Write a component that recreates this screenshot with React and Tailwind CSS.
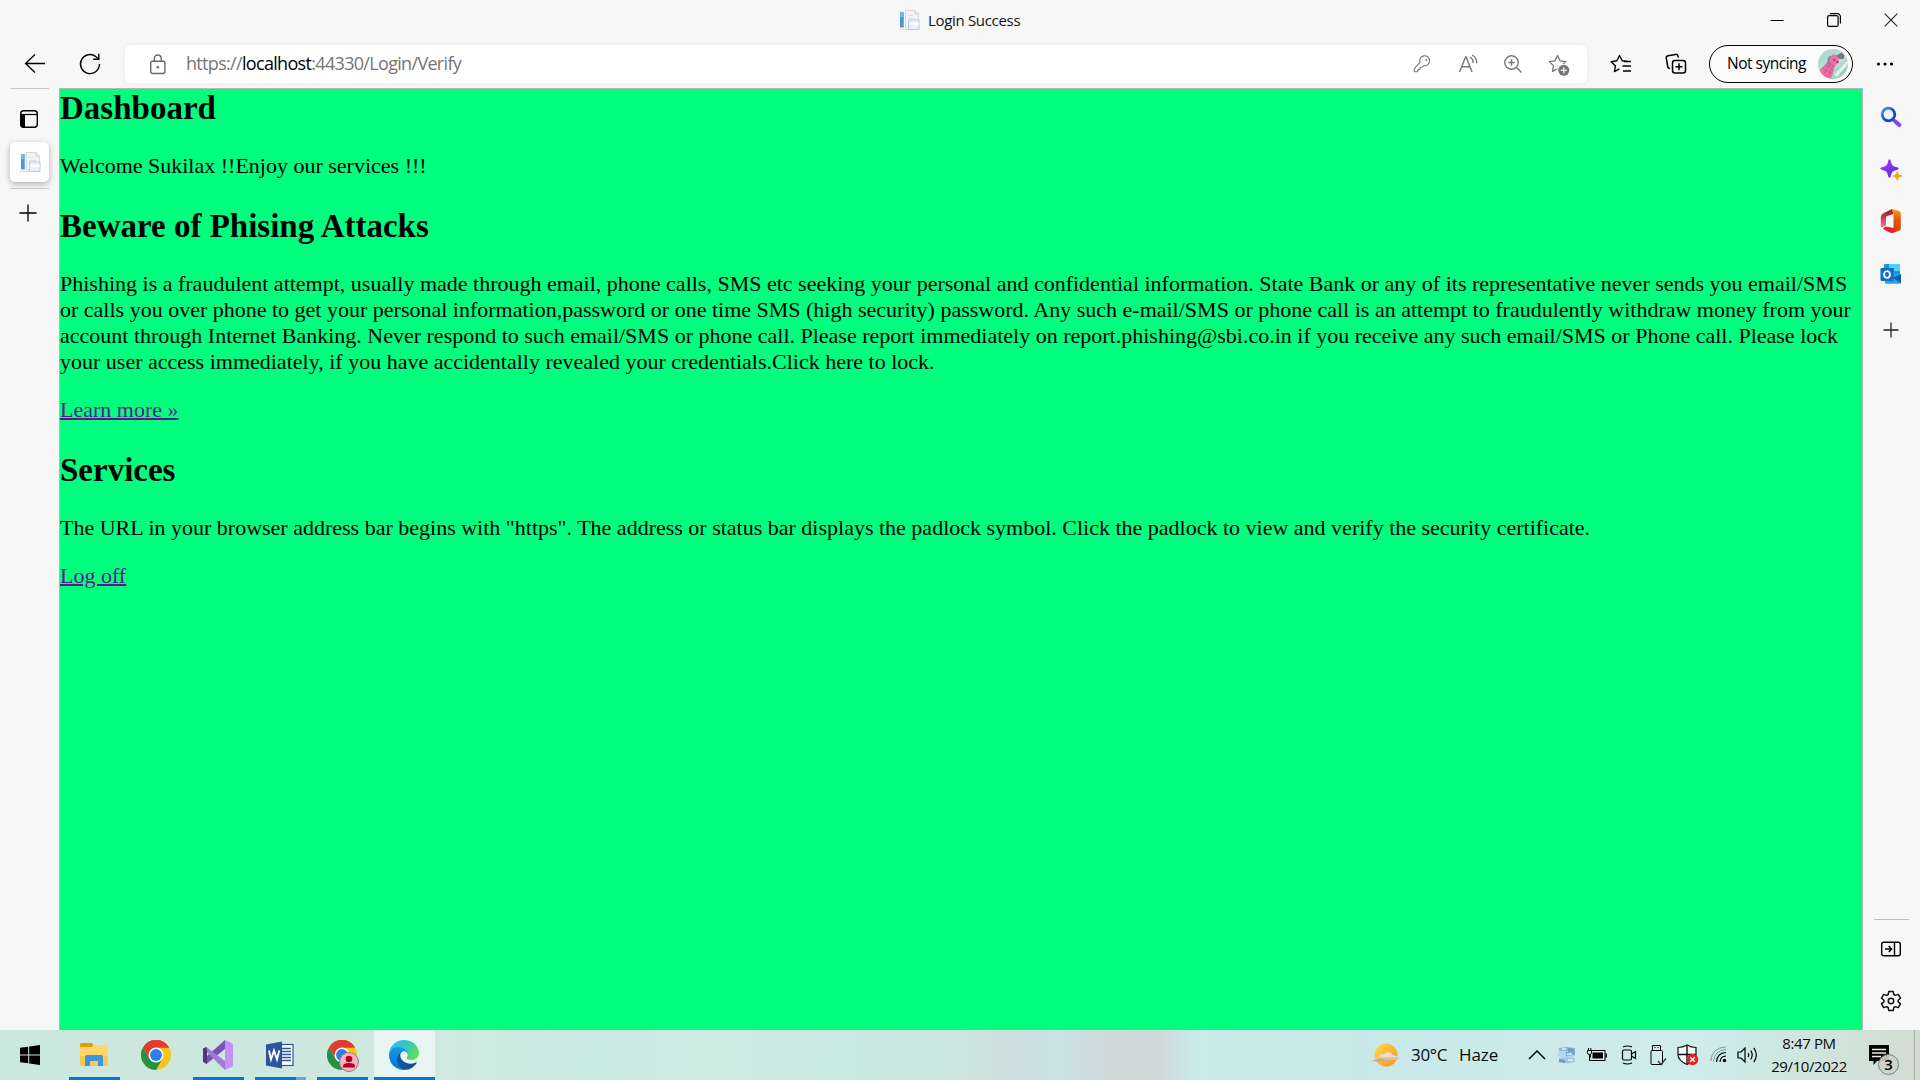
const UI = "font-['Open_Sans','Noto_Sans',sans-serif]";

function Icon({ w = 24, h, vb, children, className = '' }) {
  const hh = h ?? w;
  return (
    <svg width={w} height={hh} viewBox={vb ?? `0 0 ${w} ${hh}`} fill="none" className={`block shrink-0 ${className}`}>
      {children}
    </svg>
  );
}

function Slot({ className = '', children }) {
  return <div className={`flex shrink-0 items-center justify-center ${className}`}>{children}</div>;
}

function Favicon() {
  return (
    <Icon w={22}>
      <path d="M1 2.500h1.500M1 20.500h20" stroke="#d8dde2" />
      <rect x="2" y="3" width="3.800" height="15.500" fill="#4d9bcf" />
      <rect x="2" y="3" width="3.800" height="5" fill="#79b9e0" />
      <path d="M7.500 1.500h9.500l3.500 3.500v14h-13z" fill="#f4f5f8" stroke="#d5dae1" />
      <path d="M17 1.500V5h3.500" stroke="#c9d0d9" />
      <path d="M10 6.500h5M10 9.500h7M10 12.500h3" stroke="#d9dde6" />
      <rect x="10.500" y="11" width="10.500" height="9.500" fill="#eceff5" stroke="#c3cad6" />
      <path d="M11 14.800h10" stroke="#fff" strokeWidth="1.500" />
    </Icon>
  );
}

function TitleBar() {
  return (
    <div className="flex h-[39px] items-center">
      <div className="w-[898px]" />
      <Favicon />
      <div className={`ml-[8px] mt-0.5 w-[820px] whitespace-nowrap text-[15px] tracking-[-0.32px] text-[#111] ${UI}`}>Login Success</div>
      <Slot className="w-[57px]">
        <Icon w={14}><path d="M.5 7.500h13" stroke="#000" /></Icon>
      </Slot>
      <Slot className="w-[57px]">
        <Icon w={14}>
          <rect x=".6" y="2.600" width="10.500" height="10.800" rx="1.500" stroke="#000" strokeWidth="1.200" />
          <path d="M3 .7h7.500a2.900 2.900 0 0 1 2.900 2.900V10.500" stroke="#000" strokeWidth="1.200" />
        </Icon>
      </Slot>
      <Slot className="w-[58px]">
        <Icon w={14}><path d="M.7.700l12.600 12.600M13.300.700L.700 13.300" stroke="#222" strokeWidth="1.100" /></Icon>
      </Slot>
    </div>
  );
}

const STAR = 'M9.500 1.500l2.500 5.300 5.700.8-4.200 4 1 5.800-5-2.700-5 2.700 1-5.800-4.200-4 5.700-.8z';

function AddressBar() {
  return (
    <div className="flex h-[38px] w-[1462px] shrink-0 items-center rounded-md bg-white shadow-[0_0_6px_rgba(0,0,0,0.07)]">
      <Slot className="w-[61px] pl-[4px]">
        <Icon w={18} h={22} className="mt-px">
          <rect x="1.700" y="7.300" width="14.200" height="12.200" rx="2" stroke="#686868" strokeWidth="1.400" />
          <path d="M5.300 7V4.500a3.500 3.500 0 0 1 7 0V7" stroke="#686868" strokeWidth="1.400" />
          <circle cx="8.800" cy="13.300" r="1.300" fill="#686868" />
        </Icon>
      </Slot>
      <div className={`w-[1217px] -mt-px whitespace-nowrap text-[18px] tracking-[-0.68px] text-[#757575] ${UI}`}>
        https://<span className="text-black">localhost</span>:44330/Login/Verify
      </div>
      <Slot className="w-[40px]">
        <Icon w={20}>
          <path d="M11.400 11.900a5.300 5.300 0 1 0-4-3.500L1.800 14.400c-.5.500-.5.800-.5 1.300v1.600c0 .6.400 1 1 1h1.900c.6 0 1-.4 1-1v-1.400h1.600c.5 0 .8-.4.800-.8v-1.500h1.500c.5 0 .8-.2 1.100-.6z" stroke="#757575" strokeWidth="1.200" strokeLinejoin="round" transform="translate(0 .5) scale(.94)" />
          <circle cx="13.300" cy="6" r="1" fill="#757575" />
        </Icon>
      </Slot>
      <Slot className="w-[50px]">
        <Icon w={22} h={20} className="ml-[2px]">
          <path d="M1.500 18L7.600 3h.6l5.800 15M3.700 12.800h8.200" stroke="#757575" strokeWidth="1.400" />
          <path d="M11.500 3.500c1.700 1 2.600 2.800 2.600 5M13.600 1.300c2.800 1.600 4.100 4.200 4.200 7.500" stroke="#757575" strokeWidth="1.300" strokeLinecap="round" transform="translate(1 0)" />
        </Icon>
      </Slot>
      <Slot className="w-[40px]">
        <Icon w={20}>
          <circle cx="8.500" cy="8.500" r="6.700" stroke="#757575" strokeWidth="1.400" />
          <path d="M13.500 13.500l5 5M8.500 5.300v6.400M5.300 8.500h6.400" stroke="#757575" strokeWidth="1.400" />
        </Icon>
      </Slot>
      <Slot className="w-[51px]">
        <Icon w={24} className="mt-1">
          <path d={STAR} transform="translate(1 0)" stroke="#757575" strokeWidth="1.300" strokeLinejoin="round" />
          <circle cx="16.800" cy="16.300" r="6.500" fill="#fff" />
          <circle cx="16.800" cy="16.300" r="5.500" fill="#757575" />
          <path d="M16.800 13.300v6M13.800 16.300h6" stroke="#fff" strokeWidth="1.300" />
        </Icon>
      </Slot>
    </div>
  );
}

function Avatar() {
  return (
    <Icon w={30}>
      <defs>
        <clipPath id="av"><circle cx="15" cy="15" r="15" /></clipPath>
        <linearGradient id="avb" x1="0" y1="0" x2="1" y2="1">
          <stop offset="0" stopColor="#a4d6cb" />
          <stop offset=".55" stopColor="#bfe0d6" />
          <stop offset="1" stopColor="#7fbcae" />
        </linearGradient>
      </defs>
      <g clipPath="url(#av)">
        <rect width="30" height="30" fill="url(#avb)" />
        <path d="M16 26L30 11v4L19 28z" fill="#dff2ec" />
        <path d="M1 22L12 10l3-5 5 2 1 6-4 4-4 13H5z" fill="#ee6fa5" />
        <path d="M4 19l11 6M7 16l9 6M10 13l7 5M6 25l6-11M10 28l5-11" stroke="#d84e8c" strokeWidth=".8" />
        <path d="M13 7c-3 2-3 5-2 8l1 3" stroke="#848593" strokeWidth="2" />
        <path d="M18.500 6.500l5-3 3 3-1 3.500-4.500 0z" fill="#6c7c84" />
        <circle cx="16" cy="11" r="1" fill="#7b3763" />
        <circle cx="19.500" cy="13" r="1" fill="#7b3763" />
      </g>
    </Icon>
  );
}

function Toolbar() {
  return (
    <div className="flex h-[49px] items-start pt-[6px]">
      <div className="flex h-[38px] w-[125px] shrink-0 items-center pl-[23px]">
        <Icon w={24}>
          <path d="M22 11.500H2.500M12 2.500L2.500 11.500l9.500 9" stroke="#000" strokeWidth="1.300" />
        </Icon>
        <Icon w={24} className="ml-[31px]">
          <path d="M21.500 12A9.500 9.500 0 1 1 18 4.700l2.500 2.300" stroke="#000" strokeWidth="1.400" />
          <path d="M20.800 1.800v5.400h-5.600" stroke="#000" strokeWidth="1.400" />
        </Icon>
      </div>
      <AddressBar />
      <div className="flex h-[38px] items-center">
        <Slot className="w-[68px]">
          <Icon w={22}>
            <path d="M17.300 7.500l-5.100-.7-2.700-5.300L6.900 6.800l-5.700.9 4.200 4-1 5.900 5-2.700" transform="translate(0 1)" stroke="#000" strokeWidth="1.400" strokeLinejoin="round" />
            <path d="M14 8.500h7M12.500 13h8.500M13 18h8" stroke="#000" strokeWidth="1.400" />
          </Icon>
        </Slot>
        <Slot className="w-[42px]">
          <Icon w={22}>
            <rect x="7.500" y="7.500" width="13" height="12.500" rx="2.500" stroke="#000" strokeWidth="1.500" />
            <path d="M14 10.300v7M10.500 13.800h7" stroke="#000" strokeWidth="1.500" />
            <path d="M5 15.500l-1-.3a2.300 2.300 0 0 1-1.300-1.700L1.300 5.200a2.200 2.200 0 0 1 1.800-2.500L10.500 1.400A2.200 2.200 0 0 1 13 3l.3 1.500" stroke="#000" strokeWidth="1.500" />
          </Icon>
        </Slot>
        <div className="ml-3 flex h-[38px] w-[144px] items-center rounded-full border-[1.5px] border-black bg-[#fbfbfb] pl-[17px]">
          <span className={`w-[91px] whitespace-nowrap text-[15.5px] tracking-[-0.5px] text-black ${UI}`}>Not syncing</span>
          <Avatar />
        </div>
        <Slot className="w-[64px]">
          <Icon w={18} h={6}>
            <circle cx="2.500" cy="3" r="1.600" fill="#000" />
            <circle cx="9" cy="3" r="1.600" fill="#000" />
            <circle cx="15.500" cy="3" r="1.600" fill="#000" />
          </Icon>
        </Slot>
      </div>
    </div>
  );
}

function LeftRail() {
  return (
    <div className="flex w-[59px] shrink-0 flex-col items-start pl-[10px]">
      <div className="h-px w-[39px] bg-[#c8c8c8]" />
      <Icon w={20} className="ml-[9px] mt-5">
        <rect x="1.700" y="1.700" width="16.600" height="16.600" rx="3" stroke="#000" strokeWidth="1.400" />
        <path d="M2 5.500h16" stroke="#000" strokeWidth="1.200" />
        <path d="M1.500 5.500H6v13H4a2.500 2.500 0 0 1-2.500-2.500z" fill="#000" />
      </Icon>
      <div className="mt-[13px] flex h-10 w-[39px] items-center justify-center rounded-[5px] bg-white shadow-[0_2px_6px_rgba(0,0,0,0.3)]">
        <Favicon />
      </div>
      <div className="mt-[6px] h-px w-[39px] bg-[#c8c8c8]" />
      <Icon w={18} className="ml-[9px] mt-[15px]">
        <path d="M9 .5v17M.5 9h17" stroke="#000" strokeWidth="1.300" />
      </Icon>
    </div>
  );
}

function RightRail() {
  return (
    <div className="flex w-[57px] shrink-0 flex-col items-center pr-px">
      <Icon w={22} className="mt-[18px]">
        <defs>
          <linearGradient id="mg" x1="0" y1="0" x2="1" y2="1">
            <stop offset="0" stopColor="#2fa3ee" /><stop offset=".6" stopColor="#1449bd" />
          </linearGradient>
        </defs>
        <circle cx="8.500" cy="8.500" r="6.300" stroke="url(#mg)" strokeWidth="2.800" fill="#e6f5ff" />
        <path d="M12.800 13l2.500 2.500" stroke="#4b3a86" strokeWidth="2.500" />
        <path d="M15.300 15.500l4 3.600" stroke="#8b45e8" strokeWidth="4" strokeLinecap="round" />
      </Icon>
      <Icon w={24} className="mt-[30px]">
        <defs>
          <linearGradient id="sg" x1="0" y1="0" x2="1" y2="1">
            <stop offset="0" stopColor="#a63be8" /><stop offset=".5" stopColor="#7a35ef" /><stop offset="1" stopColor="#5326c9" />
          </linearGradient>
        </defs>
        <path d="M10.500 1.500c.8 0 1 .5 1.200 1.200 1 4.600 1.800 5.400 6.600 6.600 1.700.5 1.700 1.900 0 2.400-4.800 1.200-5.600 2-6.600 6.900-.4 1.600-2 1.600-2.400 0-1-4.900-1.800-5.700-6.600-6.900-1.700-.5-1.700-1.900 0-2.400 4.800-1.200 5.600-2 6.600-6.600.2-.7.400-1.200 1.200-1.200z" fill="url(#sg)" />
        <path d="M18.300 13.500c.9 3 1.300 3.600 4.500 4.500-3.200.9-3.600 1.500-4.500 4.500-.9-3-1.300-3.600-4.500-4.500 3.200-.9 3.600-1.500 4.500-4.500z" fill="#f2ab16" stroke="#f2ab16" strokeLinejoin="round" />
      </Icon>
      <Icon w={22} h={26} className="mt-[26px]">
        <defs>
          <linearGradient id="og" x1="0" y1="0" x2="0" y2="1">
            <stop offset="0" stopColor="#f9a215" /><stop offset=".45" stopColor="#ea5306" /><stop offset="1" stopColor="#d83b01" />
          </linearGradient>
          <linearGradient id="og2" x1="0" y1="0" x2="0" y2="1">
            <stop offset="0" stopColor="#9e1512" /><stop offset="1" stopColor="#f4769f" />
          </linearGradient>
        </defs>
        <path d="M12 1L3 5.500Q.8 6.800.8 9v8.500q0 2 1.500 2L6 17.300V8.500L13.500 6z" fill="url(#og2)" />
        <path d="M12 1l6.500 1.800q2.300.8 2.300 3v14.500q0 2-2.300 2.700L12 25l1.500-4.700V5.500z" fill="url(#og)" />
        <path d="M6 18.500l-2.500 1.300q-.5 1 .5 1.700l5 2.800q1.500.8 3 .7l4-1.200L13.500 20z" fill="#e0223c" />
      </Icon>
      <Icon w={22} className="mt-[29px]">
        <rect x="4" y="1" width="16" height="12" rx="1" fill="#1e93e3" />
        <path d="M9 1h11v7h-6V5H9z" fill="#4fd0f7" />
        <path d="M5 11h16v8.500a1.300 1.300 0 0 1-1.300 1.300H6.300A1.300 1.300 0 0 1 5 19.500z" fill="#2ba0e6" />
        <path d="M21 11v9L12.500 14.800z" fill="#0f5fae" />
        <rect x=".5" y="5" width="13" height="13" rx="1.200" fill="#0b70c8" />
        <ellipse cx="7" cy="11.500" rx="3" ry="3.400" stroke="#fff" strokeWidth="1.900" />
      </Icon>
      <Icon w={16} className="mt-[37px]">
        <path d="M8 .5v15M.5 8h15" stroke="#222" strokeWidth="1.300" />
      </Icon>
      <div className="mt-auto h-px w-[35px] bg-[#bcbcbc]" />
      <Icon w={22} className="mt-[18px]">
        <rect x="1.700" y="4.200" width="18.600" height="13.600" rx="2" stroke="#000" strokeWidth="1.400" />
        <path d="M14.500 4.500v13M5 11h6.500M8.700 8l3 3-3 3" stroke="#000" strokeWidth="1.400" />
      </Icon>
      <Icon w={24} vb="0 0 24 24" className="mt-[29px] mb-[17px]">
        <circle cx="12" cy="12" r="2.700" stroke="#111" strokeWidth="1.500" />
        <path d="M9.800 2.500h4.400l.6 3 1.500.9 3-1 2.200 3.700-2.400 2.100v1.600l2.400 2.100-2.200 3.700-3-1-1.500.9-.6 3H9.800l-.6-3-1.500-.9-3 1-2.200-3.700 2.400-2.100v-1.600L2.500 9.100l2.200-3.700 3 1 1.500-.9z" stroke="#111" strokeWidth="1.500" strokeLinejoin="round" />
      </Icon>
    </div>
  );
}

function Page() {
  const h2 = 'text-[33px] font-bold leading-[36px]';
  const link = 'block w-fit text-[22px] leading-[26px] text-[#551a8b] underline decoration-2';
  return (
    <main className="flex-1 overflow-hidden border-l border-t border-r border-[#b5b5b5] bg-[#00ff7f] pt-px font-['Liberation_Serif','Times_New_Roman',serif] text-[22px] leading-[26px] text-black">
      <h2 className={h2}>Dashboard</h2>
      <p className="mt-[27px]">Welcome Sukilax !!Enjoy our services !!!</p>
      <h2 className={`mt-[29px] ${h2}`}>Beware of Phising Attacks</h2>
      <p className="mt-[27px] whitespace-nowrap">
        Phishing is a fraudulent attempt, usually made through email, phone calls, SMS etc seeking your personal and confidential information. State Bank or any of its representative never sends you email/SMS<br />
        or calls you over phone to get your personal information,password or one time SMS (high security) password. Any such e-mail/SMS or phone call is an attempt to fraudulently withdraw money from your<br />
        account through Internet Banking. Never respond to such email/SMS or phone call. Please report immediately on report.phishing@sbi.co.in if you receive any such email/SMS or Phone call. Please lock<br />
        your user access immediately, if you have accidentally revealed your credentials.Click here to lock.
      </p>
      <a className={`mt-[22px] ${link}`}>Learn more »</a>
      <h2 className={`mt-[29px] ${h2}`}>Services</h2>
      <p className="mt-[27px] whitespace-nowrap">
        The URL in your browser address bar begins with "https". The address or status bar displays the padlock symbol. Click the padlock to view and verify the security certificate.
      </p>
      <a className={`mt-[22px] ${link}`}>Log off</a>
    </main>
  );
}

function ChromeLogo() {
  return (
    <Icon w={30} vb="0 0 48 48">
      <circle cx="24" cy="24" r="24" fill="#fcc31e" />
      <path d="M24 24L3.200 12A24 24 0 0 1 44.800 12H24z" fill="#e33b2e" />
      <path d="M3.200 12A24 24 0 0 0 24 48l10.400-18L24 24 13.600 30z" fill="#229342" />
      <path d="M24 0A24 24 0 0 0 3.200 12l10.400 18L24 12h20.800A24 24 0 0 0 24 0z" fill="#e33b2e" />
      <circle cx="24" cy="24" r="12" fill="#fff" />
      <circle cx="24" cy="24" r="9.500" fill="#2f7de9" />
    </Icon>
  );
}

function Explorer() {
  return (
    <Icon w={28} h={26}>
      <path d="M0 2.500Q0 1 1.500 1H12l1.500 2L12 5H0z" fill="#e0a000" />
      <path d="M0 5h12l2-2h12.500q1 0 1 1v20H0z" fill="#ffd667" />
      <path d="M0 14h27.500v10H0z" fill="#fbc94f" />
      <path d="M5 24V15q0-2 2-2h14q2 0 2 2v9h-5v-5h-8v5z" fill="#3a96dd" />
    </Icon>
  );
}

function VisualStudio() {
  return (
    <Icon w={30}>
      <path d="M0 8.500L3.500 7 22 30l-3-1.500L2 25q-2-.5-2-2.500z" fill="none" />
      <path d="M0 21.500L3.500 24 22 9V0L0 19.500z" fill="#7a52b5" />
      <path d="M0 8.500L3.500 7 22 21v9z" fill="#a378d8" />
      <path d="M22 0l6.500 3Q30 3.700 30 5v20q0 1.300-1.500 2L22 30z" fill="#c391f5" />
      <path d="M0 8.500L3.500 7 4 11v8l-.5 5L0 21.500z" fill="#52367f" />
    </Icon>
  );
}

function Word() {
  return (
    <Icon w={28}>
      <rect x="14" y="3.500" width="13" height="21" fill="#fff" stroke="#2b579a" strokeWidth="1.200" />
      <path d="M16 7.500h9M16 10.500h9M16 13.500h9M16 16.500h9M16 19.500h9" stroke="#2b579a" strokeWidth="1.300" />
      <path d="M0 3.500L16 .5v27L0 24.500z" fill="#2b579a" />
      <path d="M3 9.500l2 9 3-9 3 9 2.300-9" stroke="#fff" strokeWidth="1.900" />
    </Icon>
  );
}

function EdgeLogo() {
  return (
    <Icon w={30} vb="0 0 256 256">
      <defs>
        <linearGradient id="e1" x1="0" y1="0" x2="1" y2="0"><stop offset="0" stopColor="#0c59a4" /><stop offset="1" stopColor="#114a8b" /></linearGradient>
        <linearGradient id="e2" x1=".6" y1="0" x2=".3" y2="1"><stop offset="0" stopColor="#1b9de2" /><stop offset="1" stopColor="#0078d4" /></linearGradient>
        <linearGradient id="e3" x1="0" y1=".2" x2="1" y2=".6"><stop offset="0" stopColor="#35b9ee" /><stop offset=".5" stopColor="#34c4cf" /><stop offset="1" stopColor="#62e050" /></linearGradient>
      </defs>
      <path d="M231 190.500a90 90 0 0 1-10.500 4.700 101.900 101.900 0 0 1-35.900 6.500c-47.300 0-88.500-32.500-88.500-74.300a31.500 31.500 0 0 1 16.400-27.300c-42.800 1.800-53.800 46.400-53.800 72.500 0 73.900 68.100 81.400 82.800 81.400 7.900 0 19.800-2.300 27-4.600l1.300-.4a128.300 128.300 0 0 0 66.600-52.800 4 4 0 0 0-5.400-5.700z" fill="url(#e1)" />
      <path d="M105.700 241.400a79.200 79.200 0 0 1-22.700-21.300 80.700 80.700 0 0 1 29.500-120c3.200-1.500 8.500-4.100 15.600-4a32.400 32.400 0 0 1 25.700 13 31.900 31.900 0 0 1 6.300 18.700c0-.2 24.500-79.600-80-79.600-43.900 0-80 41.700-80 78.200a130.200 130.200 0 0 0 12.100 56 128 128 0 0 0 156.400 67.100 75.500 75.500 0 0 1-62.800-8z" fill="url(#e2)" />
      <path d="M152.300 148.900c-.8 1-3.300 2.500-3.300 5.600 0 2.600 1.700 5.200 4.800 7.300 14.300 10 41.400 8.600 41.500 8.600a59.600 59.600 0 0 0 30.300-8.300 61.400 61.400 0 0 0 30.400-52.900c.3-22.400-8-37.300-11.300-43.900C223.500 23.900 177.700 0 128 0A128 128 0 0 0 0 126.200c.5-36.500 36.800-66 80-66 3.500 0 23.500.3 42 10.100 16.300 8.500 24.900 18.900 30.800 29.200 6.200 10.700 7.300 24.100 7.300 29.500s-2.700 13.300-7.800 19.900z" fill="url(#e3)" />
    </Icon>
  );
}

function Task({ children, line, className = '' }) {
  return (
    <div className={`flex h-[50px] shrink-0 flex-col items-center justify-between ${className}`}>
      <Slot className="h-[47px] pt-[3px] pr-px">{children}</Slot>
      {line}
    </div>
  );
}

function Taskbar() {
  const bar = 'h-[3px] w-[51px] bg-[#0078d7]';
  return (
    <footer className={`flex h-[50px] items-center bg-[linear-gradient(90deg,#cbe8de_0px,#cde7de_300px,#cfeae0_440px,#cbeae4_605px,#cfebe2_720px,#c9e9e2_860px,#cce8e0_939px,#cddedc_1003px,#c9e2e4_1062px,#cfdadb_1100px,#cfd9da_1160px,#c9ebeb_1195px,#c9e8e9_1360px,#cdecea_1700px,#cfe6df_1800px,#d3dcd2_1920px)] text-[#0a0a0a] ${UI}`}>
      <Slot className="w-[60px]">
        <Icon w={20}><path d="M0 2.800L8.200 1.700v7.800H0zM9.200 1.500L20 0v9.500H9.200zM0 10.500h8.200v7.800L0 17.200zM9.200 10.500H20V20L9.200 18.500z" fill="#000" /></Icon>
      </Slot>
      <Task className="w-[69px]" line={<div className={bar} />}><Explorer /></Task>
      <Task className="w-[54px]"><ChromeLogo /></Task>
      <Task className="w-[70px]" line={<div className={bar} />}><VisualStudio /></Task>
      <Task className="w-[54px]" line={<div className="flex h-[3px] w-[51px] bg-[#0078d7]"><div className="ml-auto w-[10px] bg-[#5ea9e2]" /></div>}><Word /></Task>
      <Task className="w-[67px] pl-[3px]" line={<div className={bar} />}>
        <div className="relative">
          <ChromeLogo />
          <div className="absolute left-[12px] top-[12px]">
            <Icon w={20}>
              <circle cx="10" cy="10" r="9.500" fill="#fbb0bb" stroke="#8b8585" />
              <circle cx="10" cy="7" r="3.300" fill="#b00020" />
              <path d="M4 15.500v-1.500q0-3 6-3t6 3v1.500z" fill="#b00020" />
            </Icon>
          </div>
        </div>
      </Task>
      <Task className="w-[61px] bg-[#e9f5f2]" line={<div className="h-[3px] w-[61px] bg-[#0078d7]" />}><EdgeLogo /></Task>

      <div className="ml-auto flex h-[50px] items-center">
        <Slot className="w-[34px] pl-px">
          <Icon w={30} h={28}>
            <defs>
              <linearGradient id="sun" x1="0" y1="0" x2="1" y2="1"><stop offset="0" stopColor="#ffd95c" /><stop offset="1" stopColor="#f79410" /></linearGradient>
            </defs>
            <circle cx="15" cy="14" r="11.500" fill="url(#sun)" />
            <path d="M4 16.500h22c0-1.500-2-2.500-4-2.200-1-3.500-6.500-4-8.500-1-3-.8-5 .5-5.500 2.200-2 0-3.500.3-4 1z" fill="#eddccd" />
            <path d="M1 19.500q3-1.500 8-1.500h12q-3 2.500-8 2.500H5q-3 0-4-1z" fill="#c8a994" />
            <path d="M12 17h17q-3 2-9 2h-6z" fill="#d9bfab" />
          </Icon>
        </Slot>
        <div className="ml-[9px] w-[48px] whitespace-nowrap text-[17px] tracking-[-0.3px]">30°C</div>
        <div className="w-[61px] whitespace-nowrap text-[17px] tracking-[-0.1px]">Haze</div>
        <Slot className="w-[34px]"><Icon w={18} h={12}><path d="M1 10l8-8 8 8" stroke="#000" strokeWidth="1.500" /></Icon></Slot>
        <Slot className="w-[26px]">
          <Icon w={18}>
            <path d="M1 2l7-1 9 1v3l-8 1-8-1z" fill="#8fb8d8" />
            <path d="M0 6l8-1 8 2v4l-8 1-8-2z" fill="#b9d5ea" />
            <path d="M8 6l9-1v4l-9 1z" fill="#7aa7cf" />
            <path d="M1 12l7-1 9 1v4l-8 1.500L1 16z" fill="#a4c6e2" />
            <path d="M1 13l6 1v3l-6-1zM10 2l6 1v2l-6 1z" fill="#6c9bc6" />
            <path d="M4 3h4M9 8h5M10 14h5" stroke="#e8f3fb" strokeWidth="1.500" />
          </Icon>
        </Slot>
        <Slot className="w-[34px]">
          <Icon w={22} h={16}>
            <rect x="4.500" y="3.500" width="14.500" height="10" stroke="#000" />
            <path d="M6.500 5.500H17v6H6.500zM19.500 6.500h1.500v4h-1.500z" fill="#000" />
            <path d="M1.500 3.500h4v2.300q0 1.700-2 1.700t-2-1.700zM2.500 1v2.500M4.800 1v2.500M3.500 7.500v6h2" stroke="#000" fill="#cdecea" />
          </Icon>
        </Slot>
        <Slot className="w-[29px]">
          <Icon w={18} h={20}>
            <rect x="2.500" y="5" width="9" height="10" rx="1.500" stroke="#000" strokeWidth="1.200" />
            <path d="M11.500 9l4-2.500v7L11.500 11M3 2q4.500-2 9 0M3 18q4.500 2 9 0" stroke="#000" strokeWidth="1.200" />
          </Icon>
        </Slot>
        <Slot className="w-[30px]">
          <Icon w={18} h={22}>
            <path d="M3.500 6.500v-5h8v5M2.500 6.500h10q1 0 1 1v12q0 1-1 1h-9.500q-1 0-1-1v-12q0-1 .5-1zM5.500 3.500h1M8.500 3.500h1" stroke="#000" />
            <path d="M9 17l3 3.500 5-6" stroke="#333" strokeWidth="1.200" />
          </Icon>
        </Slot>
        <Slot className="w-[30px]">
          <Icon w={22}>
            <path d="M10 1q4 2.500 9 2.500v7q0 6-9 10-9-4-9-10v-7Q6 3.500 10 1z" fill="#f4fbfa" stroke="#111" strokeWidth="1.200" />
            <path d="M10 1v19M1 10.500h18" stroke="#111" strokeWidth="1.400" />
            <circle cx="15.500" cy="15.500" r="5.800" fill="#e2242b" />
            <path d="M13.200 13.200l4.600 4.600M17.800 13.200l-4.600 4.600" stroke="#fff" strokeWidth="1.500" />
          </Icon>
        </Slot>
        <Slot className="w-[32px]">
          <Icon w={18}>
            <circle cx="14.500" cy="14.500" r="1.700" fill="#000" />
            <path d="M10 16q.2-5.500 6-6M6.500 16Q7 7 16 6.500" stroke="#000" strokeWidth="1.200" />
            <path d="M3.500 15.500Q4 4.500 16 3.500M.8 15Q1.500 2 16 .8" stroke="#7d9a98" />
          </Icon>
        </Slot>
        <Slot className="w-[26px]">
          <Icon w={22} h={18}>
            <path d="M1 6h3l4-4v14l-4-4H1z" stroke="#000" strokeWidth="1.200" />
            <path d="M11 7q1.500 2 0 4M13.700 4.500q3 4.500 0 9M16.800 1.800q5 7 0 14.400" stroke="#000" strokeWidth="1.200" />
          </Icon>
        </Slot>
        <div className="w-[96px] whitespace-nowrap text-center text-[15px] leading-[23px] tracking-[-0.4px]">
          <div>8:47 PM</div>
          <div>29/10/2022</div>
        </div>
        <div className="flex h-[50px] w-[57px] items-center pl-[11px]">
          <div className="relative">
            <Icon w={22}>
              <path d="M1 1h20v16H9l-3.500 4V17H1z" fill="#000" />
              <path d="M4 5.500h14M4 9h14M4 12.500h9" stroke="#e8eeea" strokeWidth="1.500" />
            </Icon>
            <div className="absolute left-[10px] top-[10px] flex h-[21px] w-[21px] items-center justify-center rounded-full border border-[#77807c] bg-[#ccd2cc]/90 text-[15px] font-semibold leading-none text-black">3</div>
          </div>
        </div>
        <div className="h-[50px] w-[6px] border-l border-[#a9b1aa]" />
      </div>
    </footer>
  );
}

export default function App() {
  return (
    <div className="flex h-[1080px] w-[1920px] flex-col overflow-hidden bg-[#f7f7f7]">
      <TitleBar />
      <Toolbar />
      <div className="flex min-h-0 flex-1">
        <LeftRail />
        <Page />
        <RightRail />
      </div>
      <Taskbar />
    </div>
  );
}
